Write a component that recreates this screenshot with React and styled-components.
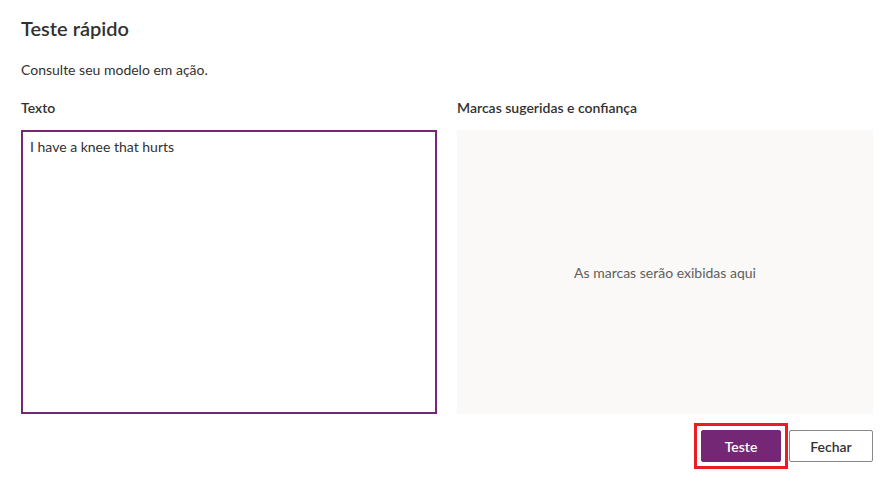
import styled, { createGlobalStyle } from "styled-components"

const GlobalStyle = createGlobalStyle`
  html, body {
    margin: 0;
    padding: 0;
    background: #ffffff;
  }
  body {
    font-family: "Segoe UI", Lato, "Noto Sans", sans-serif;
    color: #323130;
  }
`

const Panel = styled.div`
  width: 894px;
  height: 485px;
  box-sizing: border-box;
  padding: 14px 21px 0 21px;
`

const Title = styled.h1`
  margin: 0;
  font-size: 20px;
  font-weight: 600;
  line-height: 28px;
  color: #323130;
`

const Desc = styled.p`
  margin: 18px 0 0 0;
  font-size: 14px;
  line-height: 20px;
  color: #323130;
`

const Columns = styled.div`
  display: grid;
  grid-template-columns: 416px 416px;
  column-gap: 20px;
  margin-top: 18px;
`

const Column = styled.div`
  display: flex;
  flex-direction: column;
`

const Label = styled.label`
  font-size: 14px;
  font-weight: 600;
  line-height: 20px;
  color: #323130;
  margin-bottom: 12px;
`

const TextArea = styled.textarea`
  box-sizing: border-box;
  width: 416px;
  height: 284px;
  border: 2px solid #742774;
  border-radius: 0;
  padding: 5px 7px;
  margin: 0;
  resize: none;
  outline: none;
  font-family: inherit;
  font-size: 14px;
  line-height: 20px;
  color: #323130;
`

const TagsBox = styled.div`
  height: 284px;
  background: #faf9f8;
  display: flex;
  align-items: center;
  justify-content: center;
  font-size: 14px;
  color: #605e5c;
`

const Footer = styled.div`
  display: flex;
  justify-content: flex-end;
  gap: 8px;
  margin-top: 16px;
`

const Highlight = styled.div`
  display: flex;
  outline: 3px solid #ea1d25;
  outline-offset: 4px;
`

const Button = styled.button`
  box-sizing: border-box;
  height: 32px;
  min-width: ${(p) => p.$width}px;
  padding: 0 16px;
  border-radius: 2px;
  font-family: inherit;
  font-size: 14px;
  font-weight: 600;
  cursor: pointer;
  border: 1px solid ${(p) => (p.$primary ? "#742774" : "#8a8886")};
  background: ${(p) => (p.$primary ? "#742774" : "#ffffff")};
  color: ${(p) => (p.$primary ? "#ffffff" : "#323130")};
`

const App = () => {
  return (
    <Panel>
      <GlobalStyle />
      <Title>Teste rápido</Title>
      <Desc>Consulte seu modelo em ação.</Desc>
      <Columns>
        <Column>
          <Label>Texto</Label>
          <TextArea defaultValue="I have a knee that hurts" />
        </Column>
        <Column>
          <Label>Marcas sugeridas e confiança</Label>
          <TagsBox>As marcas serão exibidas aqui</TagsBox>
        </Column>
      </Columns>
      <Footer>
        <Highlight>
          <Button $primary $width={80}>Teste</Button>
        </Highlight>
        <Button $width={84}>Fechar</Button>
      </Footer>
    </Panel>
  )
}

export default App
